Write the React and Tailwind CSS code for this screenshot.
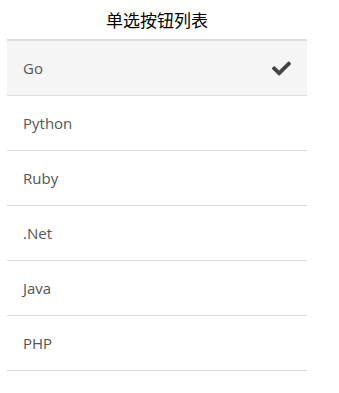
import React from "react";
import { FaCheck } from "react-icons/fa";

const items = ["Go", "Python", "Ruby", ".Net", "Java", "PHP"];

export default function App() {
  return (
    <div className="w-[339px] h-[393px] bg-white">
      <div className="ml-[7px] w-[300px]">
        <div
          className="h-[39px] flex items-center justify-center text-[17px] text-black"
          style={{ fontFamily: '"Noto Sans CJK SC", sans-serif' }}
        >
          单选按钮列表
        </div>
        <div className="border-t-2 border-[#dddddd]">
          {items.map((it, i) => (
            <div
              key={it}
              className={`h-[55px] border-b border-[#dddddd] flex items-center justify-between pl-4 pr-[15px] ${
                i === 0 ? "bg-[#f5f5f5]" : "bg-white"
              }`}
            >
              <span
                className="text-[15px] text-[#555555]"
                style={{ fontFamily: '"Open Sans", sans-serif' }}
              >
                {it}
              </span>
              {i === 0 && <FaCheck className="text-[#444444] w-[21px] h-[19px]" />}
            </div>
          ))}
        </div>
      </div>
    </div>
  );
}
